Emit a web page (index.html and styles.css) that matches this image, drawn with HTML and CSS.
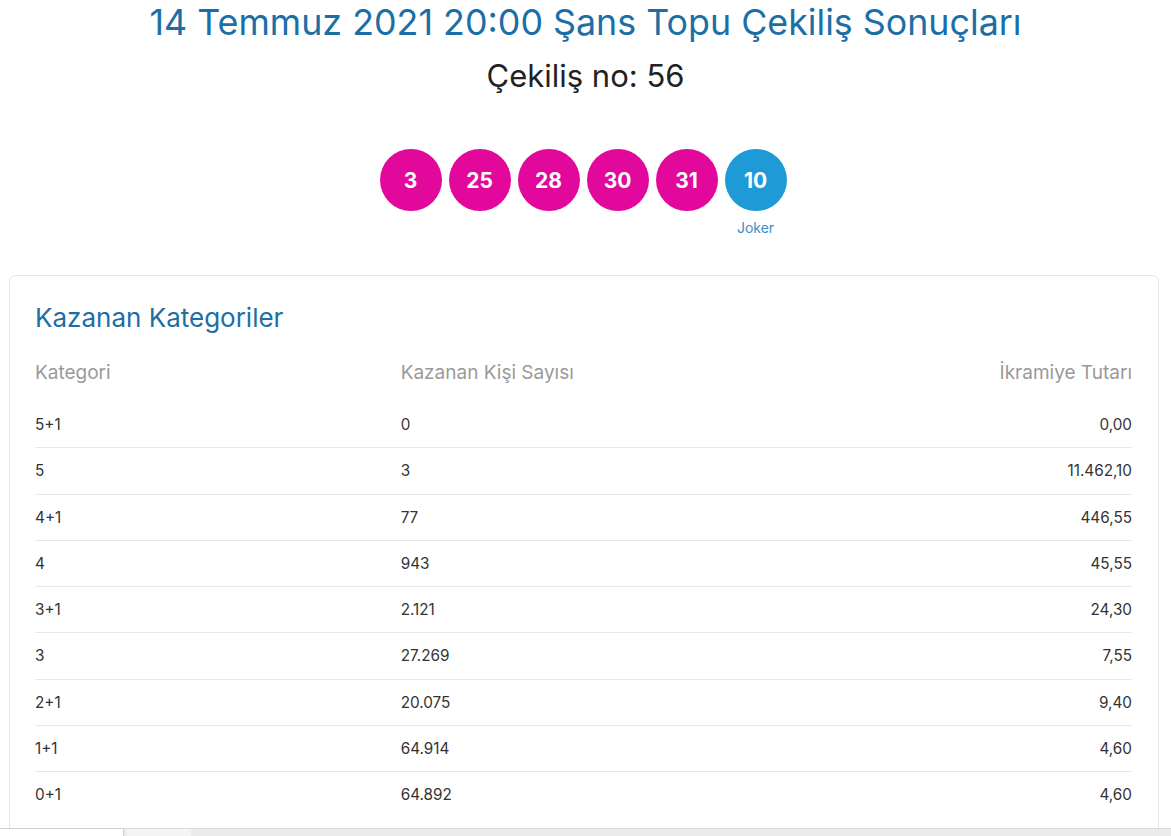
FILE: index.html
```html
<!DOCTYPE html>
<html lang="tr">

<head>
    <meta charset="UTF-8">
    <meta name="viewport" content="width=device-width, initial-scale=1.0">
    <title>Şans Topu Çekiliş Sonuçları</title>
    <link rel="stylesheet" href="styles.css">
</head>

<body>
    <div class="header">
        <h1 class="title">14 Temmuz 2021 20:00 Şans Topu Çekiliş Sonuçları</h1>
        <div class="draw-no">Çekiliş no: 56</div>
    </div>

    <div class="balls">
        <div class="ball-wrap"><span class="ball">3</span></div>
        <div class="ball-wrap"><span class="ball">25</span></div>
        <div class="ball-wrap"><span class="ball">28</span></div>
        <div class="ball-wrap"><span class="ball">30</span></div>
        <div class="ball-wrap"><span class="ball">31</span></div>
        <div class="ball-wrap">
            <span class="ball joker">10</span>
            <span class="ball-label">Joker</span>
        </div>
    </div>

    <div class="card">
        <h2 class="card-title">Kazanan Kategoriler</h2>
        <table class="results">
            <thead>
                <tr>
                    <th>Kategori</th>
                    <th>Kazanan Kişi Sayısı</th>
                    <th class="right">İkramiye Tutarı</th>
                </tr>
            </thead>
            <tbody>
                <tr><td>5+1</td><td>0</td><td class="right">0,00</td></tr>
                <tr><td>5</td><td>3</td><td class="right">11.462,10</td></tr>
                <tr><td>4+1</td><td>77</td><td class="right">446,55</td></tr>
                <tr><td>4</td><td>943</td><td class="right">45,55</td></tr>
                <tr><td>3+1</td><td>2.121</td><td class="right">24,30</td></tr>
                <tr><td>3</td><td>27.269</td><td class="right">7,55</td></tr>
                <tr><td>2+1</td><td>20.075</td><td class="right">9,40</td></tr>
                <tr><td>1+1</td><td>64.914</td><td class="right">4,60</td></tr>
                <tr><td>0+1</td><td>64.892</td><td class="right">4,60</td></tr>
            </tbody>
        </table>
    </div>

    <div class="tabs">
        <span class="tab active"></span>
        <span class="tab light"></span>
    </div>
</body>

</html>
```

FILE: styles.css
```css
body {
    margin: 0;
    font-family: Inter, "Noto Sans", sans-serif;
    color: #333;
    background: #fff;
    overflow: hidden;
    height: 836px;
    position: relative;
}

.header {
    text-align: center;
}

.title {
    margin: 0;
    padding-top: 1px;
    font-size: 35.8px;
    font-weight: 400;
    line-height: 42px;
    color: #1b6fa6;
}

.draw-no {
    margin-top: 13px;
    font-size: 31px;
    line-height: 40px;
    color: #222;
}

.balls {
    display: flex;
    justify-content: center;
    gap: 7px;
    margin-top: 53px;
    height: 108px;
    padding-right: 5px;
}

.ball-wrap {
    display: flex;
    flex-direction: column;
    align-items: center;
    width: 62px;
}

.ball {
    display: flex;
    justify-content: center;
    align-items: center;
    width: 62px;
    height: 62px;
    border-radius: 50%;
    background: #e2089b;
    color: #fff;
    font-size: 21px;
    font-weight: 700;
}

.joker {
    background: #1e9ad6;
}

.ball-label {
    margin-top: 8px;
    font-size: 14px;
    color: #3d8fc4;
}

.card {
    margin: 18px 12px 0 9px;
    border: 1px solid #e6e6e6;
    border-radius: 6px;
    padding: 24px 26px 30px 25px;
}

.card-title {
    margin: 0;
    font-size: 26px;
    font-weight: 400;
    line-height: 36px;
    color: #1b6fa6;
}

.results {
    width: 100%;
    border-collapse: collapse;
    margin-top: 24px;
}

.results th,
.results td {
    width: 33.33%;
    padding: 0;
    text-align: left;
}

.results th {
    font-size: 19px;
    font-weight: 400;
    color: #9a9a9a;
    height: 41px;
    vertical-align: top;
    padding-top: 1px;
}

.results td {
    font-size: 15.3px;
    height: 45.25px;
    border-bottom: 1px solid #e8e8e8;
    color: #333;
}

.results tbody tr:last-child td {
    border-bottom: none;
}

.results .right {
    text-align: right;
}

.tabs {
    position: absolute;
    left: 0;
    right: 0;
    bottom: 0;
    height: 7px;
    display: flex;
    background: #ebebeb;
    border-top: 1px solid #dcdcdc;
}

.tab {
    width: 123px;
}

.tab.active {
    background: #fff;
    border-right: 1px solid #cfcfcf;
    margin-top: -1px;
    border-top: 1px solid #cfcfcf;
}

.tab.light {
    width: 64px;
    margin-left: 3px;
    background: #f4f4f4;
}
```
